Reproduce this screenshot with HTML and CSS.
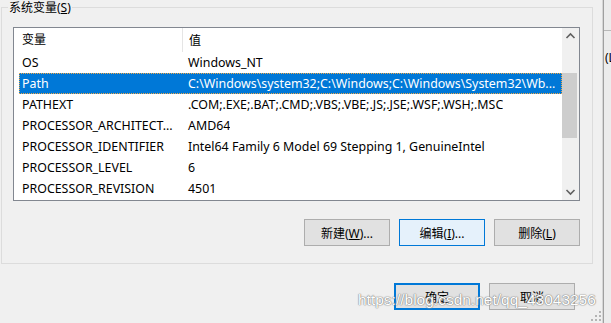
FILE: index.html
```html
<!DOCTYPE html>
<html lang="zh-CN">
<head>
  <meta charset="UTF-8" />
  <title>环境变量</title>
  <link rel="stylesheet" href="styles.css">
</head>
<body>
  <div class="screen">
    <div class="dialog">
      <div class="group">
        <span class="group-title">系统变量(<u>S</u>)</span>

        <div class="listview">
          <div class="list-body">
            <div class="list-head">
              <div class="col col-name">变量</div>
              <div class="col col-value">值</div>
            </div>
            <div class="row">
              <div class="col col-name">OS</div>
              <div class="col col-value">Windows_NT</div>
            </div>
            <div class="row selected">
              <div class="col col-name">Path</div>
              <div class="col col-value">C:\Windows\system32;C:\Windows;C:\Windows\System32\Wb...</div>
            </div>
            <div class="row">
              <div class="col col-name">PATHEXT</div>
              <div class="col col-value">.COM;.EXE;.BAT;.CMD;.VBS;.VBE;.JS;.JSE;.WSF;.WSH;.MSC</div>
            </div>
            <div class="row">
              <div class="col col-name">PROCESSOR_ARCHITECT...</div>
              <div class="col col-value">AMD64</div>
            </div>
            <div class="row">
              <div class="col col-name">PROCESSOR_IDENTIFIER</div>
              <div class="col col-value">Intel64 Family 6 Model 69 Stepping 1, GenuineIntel</div>
            </div>
            <div class="row">
              <div class="col col-name">PROCESSOR_LEVEL</div>
              <div class="col col-value">6</div>
            </div>
            <div class="row">
              <div class="col col-name">PROCESSOR_REVISION</div>
              <div class="col col-value">4501</div>
            </div>
          </div>

          <div class="scrollbar">
            <div class="sb-arrow">
              <svg width="17" height="17" viewBox="0 0 17 17"><polyline points="4.5,10 8.5,6 12.5,10" fill="none" stroke="#606060" stroke-width="1.6"/></svg>
            </div>
            <div class="sb-track"><div class="sb-thumb"></div></div>
            <div class="sb-arrow">
              <svg width="17" height="17" viewBox="0 0 17 17"><polyline points="4.5,7 8.5,11 12.5,7" fill="none" stroke="#606060" stroke-width="1.6"/></svg>
            </div>
          </div>
        </div>

        <div class="btn-row">
          <button class="btn">新建(<u>W</u>)...</button>
          <button class="btn hover">编辑(<u>I</u>)...</button>
          <button class="btn">删除(<u>L</u>)</button>
        </div>
      </div>

      <div class="btn-row dialog-buttons">
        <button class="btn default">确定</button>
        <button class="btn">取消</button>
      </div>

      <div class="watermark">https://blog.csdn.net/qq_43043256</div>
      <svg class="grip" width="11" height="11" viewBox="0 0 11 11">
        <rect x="8" y="0" width="2" height="2" fill="#b4b4b4"/>
        <rect x="4" y="4" width="2" height="2" fill="#b4b4b4"/>
        <rect x="8" y="4" width="2" height="2" fill="#b4b4b4"/>
        <rect x="0" y="8" width="2" height="2" fill="#b4b4b4"/>
        <rect x="4" y="8" width="2" height="2" fill="#b4b4b4"/>
        <rect x="8" y="8" width="2" height="2" fill="#b4b4b4"/>
      </svg>
    </div>

    <div class="behind">
      <div class="behind-line"></div>
      <div class="behind-text">(L)</div>
    </div>
  </div>
</body>
</html>
```

FILE: styles.css
```css
body {
  margin: 0;
  padding: 0;
  background: #f0f0f0;
  font-family: 'Noto Sans', 'Noto Sans CJK SC', sans-serif;
  font-size: 12px;
  color: #000;
}

.screen {
  display: flex;
  width: 611px;
  height: 323px;
  overflow: hidden;
}

.dialog {
  position: relative;
  width: 603px;
  flex: none;
}

/* group box */
.group {
  position: relative;
  box-sizing: border-box;
  width: 592px;
  margin: 7px 0 0 1px;
  padding: 19px 12px 17px 11px;
  border: 1px solid #dcdcdc;
}

.group-title {
  position: absolute;
  top: -8px;
  left: 6px;
  padding: 0 1px;
  background: #f0f0f0;
  line-height: 15px;
}

/* list view */
.listview {
  display: flex;
  box-sizing: border-box;
  width: 567px;
  height: 174px;
  border: 1px solid #828790;
  background: #fff;
  font-size: 12.4px;
}

.list-body {
  flex: 1;
  padding-left: 5px;
}

.list-head {
  display: flex;
  height: 24px;
  align-items: center;
  font-size: 12px;
}

.list-head .col-name {
  border-right: 1px solid #e5e5e5;
  height: 24px;
  line-height: 24px;
}

.row {
  display: flex;
  height: 21px;
  line-height: 20px;
  box-sizing: border-box;
  border: 1px solid transparent;
}

.col {
  white-space: nowrap;
  overflow: hidden;
}

.col-name {
  box-sizing: border-box;
  width: 164px;
  padding-left: 3px;
}

.col-value {
  padding-left: 6px;
}

.row .col-value {
  padding-left: 5px;
}

.row .col-name {
  padding-left: 2px;
  width: 163px;
}

.row.selected {
  background: #0078d7;
  color: #fff;
  border: 1px dotted #f0a848;
}

/* scrollbar */
.scrollbar {
  display: flex;
  flex-direction: column;
  width: 17px;
  background: #f0f0f0;
}

.sb-arrow {
  height: 17px;
}

.sb-arrow svg {
  display: block;
}

.sb-track {
  flex: 1;
}

.sb-thumb {
  width: 15px;
  height: 65px;
  margin: 28px 0 0 0;
  background: #cdcdcd;
}

/* buttons */
.btn-row {
  display: flex;
  justify-content: flex-end;
  gap: 9px;
  margin-top: 18px;
}

.btn {
  box-sizing: border-box;
  width: 86px;
  height: 27px;
  padding: 0;
  background: #e1e1e1;
  border: 1px solid #adadad;
  font-family: 'Noto Sans', 'Noto Sans CJK SC', sans-serif;
  font-size: 12px;
  color: #000;
}

.btn.hover {
  background: #e5f1fb;
  border-color: #0078d7;
}

.btn.default {
  border: 2px solid #0078d7;
}

.dialog-buttons {
  margin-top: 19px;
  padding-right: 28px;
}

.watermark {
  position: absolute;
  left: 358px;
  top: 291px;
  font-family: 'Liberation Sans', sans-serif;
  font-size: 15.5px;
  color: #ffffff;
  text-shadow: 0 0 1px #6e6e6e, 0 0 1px #8a8a8a, 0 0 2px #b0b0b0;
  white-space: nowrap;
}

.grip {
  position: absolute;
  right: 1px;
  bottom: 1px;
}

/* window behind the dialog */
.behind {
  flex: 1;
  border-left: 1px solid #a0a0a0;
  box-shadow: -1px 0 0 #d6d6d6;
  background: #ececec;
  overflow: hidden;
}

.behind-line {
  height: 30px;
  border-bottom: 1px solid #b8b8b8;
}

.behind-text {
  margin-top: 18px;
  padding-left: 1px;
  white-space: nowrap;
}
```
